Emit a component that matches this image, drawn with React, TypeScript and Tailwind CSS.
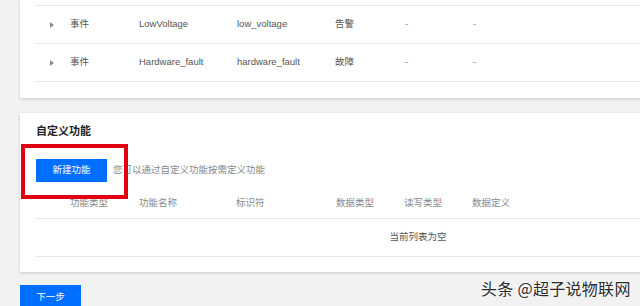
import React from "react";

const font = { fontFamily: '"Liberation Sans", "Noto Sans CJK SC", sans-serif' };

function Tri() {
  return <span className="inline-block w-0 h-0 border-y-[3px] border-y-transparent border-l-[4px] border-l-[#8a8a8a]" />;
}

function Row({ a, b, c, d }: { a: string; b: string; c: string; d: string }) {
  return (
    <div className="flex items-center h-[38px] border-b border-[#e8e8e8] text-[9.5px] text-[#555]">
      <div className="w-[35px] pl-[15px] flex items-center"><Tri /></div>
      <div className="w-[69px]">{a}</div>
      <div className="w-[98px]">{b}</div>
      <div className="w-[98px]">{c}</div>
      <div className="w-[70px]">{d}</div>
      <div className="w-[68px] text-[#888]">-</div>
      <div className="w-[68px] text-[#888]">-</div>
    </div>
  );
}

export default function App() {
  return (
    <div className="relative w-[640px] h-[306px] overflow-hidden bg-[#f2f2f2] pl-[20px]" style={font}>
      <div className="w-[796px] bg-white shadow-[0_1px_3px_rgba(0,0,0,0.18)] px-[15px] pb-[16px]">
        <div className="h-[6px] border-b border-[#e8e8e8]" />
        <Row a="事件" b="LowVoltage" c="low_voltage" d="告警" />
        <Row a="事件" b="Hardware_fault" c="hardware_fault" d="故障" />
      </div>

      <div className="mt-[15px] w-[796px] bg-white shadow-[0_1px_3px_rgba(0,0,0,0.18)] px-[16px] pt-[11px] pb-[15px]">
        <div className="text-[11px] font-bold text-[#222] leading-[14px]">自定义功能</div>
        <div className="mt-[21px] flex items-center">
          <div className="w-[71px] h-[23px] bg-[#006eff] text-white text-[9.5px] flex items-center justify-center">新建功能</div>
          <div className="ml-[6px] text-[9.5px] text-[#888]">您可以通过自定义功能按需定义功能</div>
        </div>
        <div className="-mx-px">
          <div className="mt-[6px] flex items-center h-[31px] border-b border-[#e8e8e8] text-[9.5px] text-[#888]">
            <div className="w-[35px]" />
            <div className="w-[69px]">功能类型</div>
            <div className="w-[97px]">功能名称</div>
            <div className="w-[100px]">标识符</div>
            <div className="w-[68px]">数据类型</div>
            <div className="w-[68px]">读写类型</div>
            <div className="w-[68px]">数据定义</div>
          </div>
          <div className="flex items-center justify-center h-[38px] border-b border-[#e8e8e8] text-[9.5px] text-[#555]">当前列表为空</div>
        </div>
      </div>

      <div className="mt-[13px] w-[61px] h-[24px] bg-[#006eff] text-white text-[9.5px] flex items-center justify-center">下一步</div>

      <div className="absolute left-[21px] top-[144px] w-[107px] h-[55px] border-[4px] border-[#e00012]" />

      <div className="absolute left-[481px] top-[276px] text-[16px] text-[#2a2a2a] [text-shadow:0_0_2px_#fff,0_0_2px_#fff] tracking-[0.3px]" style={{ fontFamily: '"Noto Sans CJK SC", sans-serif' }}>
        头条 @超子说物联网
      </div>
    </div>
  );
}
